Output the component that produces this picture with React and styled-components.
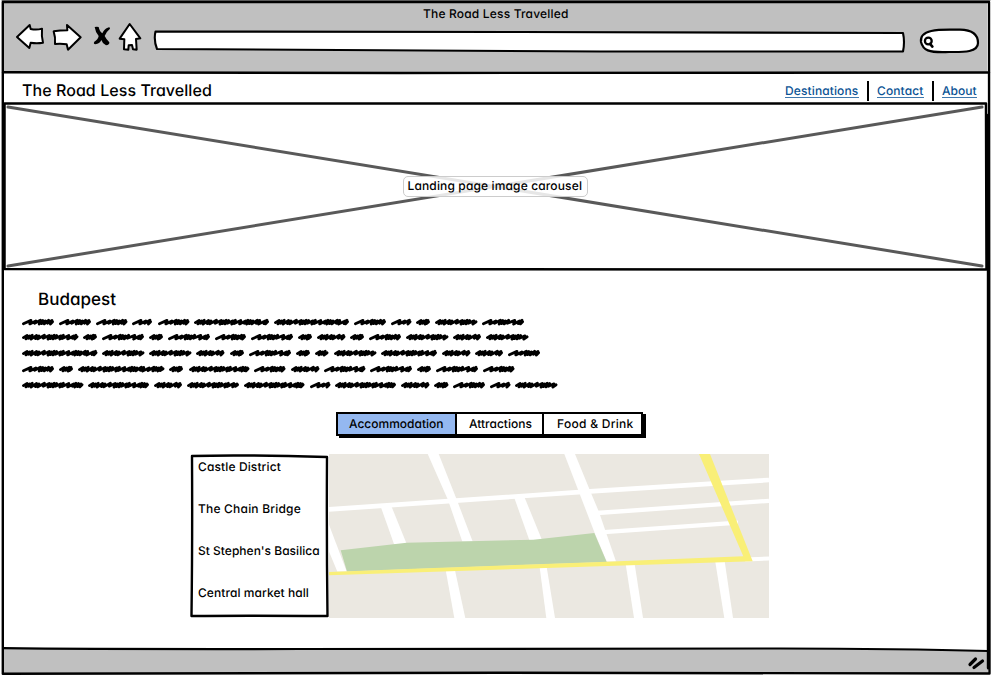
import React from "react";
import styled, { createGlobalStyle } from "styled-components";

const Global = createGlobalStyle`
  * { box-sizing: border-box; }
  body { margin: 0; background: #fff; overflow: hidden; }
`;

const Window = styled.main`
  position: relative;
  width: 992px;
  height: 676px;
  padding: 3px 4px 4px;
  display: flex;
  flex-direction: column;
  font-family: Inter, "Liberation Sans", sans-serif;
  font-feature-settings: "cv11" 1, "calt" 0;
  font-weight: 500;
  font-size: 12px;
  line-height: 16px;
  text-rendering: geometricPrecision;
  color: #000;
`;

const Outline = styled.svg`
  position: absolute;
  inset: 0;
  width: 100%;
  height: 100%;
  overflow: visible;
  pointer-events: none;
  fill: none;
  stroke: #000;
  stroke-linejoin: round;
  stroke-linecap: round;
`;

const Toolbar = styled.header`
  height: 70px;
  flex: none;
  margin-right: 1px;
  background: #c0c0c0;
`;

const Label = styled.span`
  display: inline-block;
  white-space: nowrap;
  letter-spacing: ${(p) => p.$track || 0}px;
`;

const WindowTitle = styled.div`
  height: 20px;
  padding: 3px 0 0 419px;
`;

const Controls = styled.div`
  display: flex;
  height: 36px;
  padding-left: 12px;
`;

const Icon = styled.svg`
  flex: none;
  width: ${(p) => p.$w}px;
  height: 32px;
  margin-right: ${(p) => p.$gap || 0}px;
  overflow: visible;
  fill: #fff;
  stroke: #000;
  stroke-width: 6;
  stroke-linejoin: round;
  stroke-linecap: round;
`;

const AddressBar = styled.div`
  position: relative;
  width: 752px;
  height: 22px;
  margin: 7px 14px 0 10px;
`;

const SearchBox = styled.div`
  position: relative;
  width: 60px;
  height: 26px;
  margin-top: 5px;
`;

const SiteHeader = styled.div`
  height: 30px;
  flex: none;
  display: flex;
  justify-content: space-between;
  padding: 8px 11px 0 18px;
`;

const SiteName = styled.h1`
  margin: 0;
  font-size: 16px;
  font-weight: 500;
  line-height: 18px;
`;

const Nav = styled.nav`
  display: flex;
`;

const NavLink = styled.a`
  height: 16px;
  margin-top: 1px;
  padding-top: 1px;
  width: ${(p) => p.$w}px;
  color: #0b5394;
  border-bottom: 1px solid #3f78ad;
`;

const Divider = styled.i`
  width: 2px;
  height: 20px;
  margin: 0 8px;
  background: #000;
`;

const Carousel = styled.section`
  position: relative;
  height: 168px;
  flex: none;
  display: flex;
  align-items: center;
  justify-content: center;
`;

const Caption = styled.div`
  position: relative;
  width: 185px;
  height: 21px;
  margin: 0 2px 2px 0;
  padding: 1px 0 0 4px;
  border: 1px solid #ccc;
  border-radius: 5px;
  background: rgba(255, 255, 255, 0.85);
`;

const Article = styled.section`
  height: 141px;
  flex: none;
  padding: 18px 18px 0;
`;

const Heading = styled.h2`
  margin: 0 0 6.5px 16px;
  height: 22px;
  font-size: 17px;
  font-weight: 500;
  line-height: 22px;
`;

const Line = styled.div`
  position: relative;
  display: flex;
  height: 15.8px;
`;

const Scribble = styled.svg`
  flex: none;
  height: 8px;
  width: ${(p) => p.$w}px;
  margin-right: ${(p) => p.$gap}px;
  overflow: visible;
  fill: none;
  stroke: #000;
  stroke-width: 2.8;
  stroke-linejoin: round;
  stroke-linecap: round;
`;

const Tabs = styled.div`
  display: flex;
  width: 307px;
  height: 24px;
  flex: none;
  margin: 0 0 1px 332px;
  border: 2px solid #000;
  box-shadow: 3px 2px 0 #000;
`;

const Tab = styled.button`
  width: ${(p) => p.$w}px;
  padding: 0 0 0 ${(p) => p.$pad}px;
  text-align: left;
  font: inherit;
  font-feature-settings: inherit;
  text-rendering: inherit;
  color: #000;
  border: 0;
  border-right: ${(p) => (p.$last ? 0 : 2)}px solid #000;
  background: ${(p) => (p.$active ? "#94b8f0" : "#fff")};
`;

const Explorer = styled.section`
  display: flex;
  height: 164px;
  margin: 17px 0 0 186px;
  flex: none;
`;

const PlaceList = styled.ul`
  position: relative;
  width: 139px;
  height: 164px;
  margin: 0;
  padding: 5px 0 0 8px;
  list-style: none;
`;

const Place = styled.li`
  height: 42px;
`;

const Map = styled.svg`
  width: 440px;
  height: 164px;
`;

const StatusBar = styled.footer`
  position: relative;
  height: 25px;
  margin-top: auto;
  flex: none;
`;

const lines = [
  [[22, 54], [59, 91], [95.5, 127], [132, 152], [157.5, 189], [194, 269], [274, 349], [354, 386], [390.5, 411], [416, 430], [435, 477.5], [482, 524]],
  [[22, 78.5], [83, 97], [102, 144], [149, 163], [168, 210], [215, 246], [251, 293], [298, 312], [317, 345.5], [350, 364], [369, 401], [405.5, 448], [453, 481], [486, 528.5]],
  [[22, 97.5], [102, 144.5], [149, 191.5], [196, 224.5], [229.5, 243.5], [249, 291], [295.5, 309.5], [315, 328.5], [333.5, 376], [381, 437], [441.5, 470], [475, 503], [508, 540]],
  [[22, 54], [59, 73], [78, 164.5], [169, 183], [188.5, 249], [254, 285.5], [290.5, 319], [324, 365.5], [370, 412], [417, 431], [436, 478], [482.5, 514]],
  [[22, 83.5], [88, 149], [154, 182], [187, 239], [244, 304.5], [309.5, 330], [335, 396], [400.5, 429], [434, 448.5], [453, 485], [489.5, 510], [515, 557.5]],
];

// Pen strokes filling one word of placeholder text: open loops mixed with dense ones.
const openSteps = [6.2, 4.8, 4.6, 2.4, 2.6, 3.2];
const denseSteps = [2.3, 2.6, 2.5, 4.4, 2.4, 5.4, 4.8];

function wordPath(w) {
  const open = (w > 30 && w < 33) || (w > 19 && w < 22) || (w > 41 && w < 42.3);
  const steps = open ? openSteps : denseSteps;
  let x = 1.4;
  let d = `M${x} ${open ? 5.8 : 4.6}`;
  for (let i = 0; x < w - 5; i++) {
    const s = steps[i % steps.length];
    const hi = [2.4, 2.9, 2.2][i % 3];
    const lo = [5.9, 5.3, 6.1, 5.6][i % 4];
    const peak = Math.min(x + s + 1.4, w - 2);
    d += `L${peak} ${hi}L${Math.min(peak - 1.2, w - 3.6)} ${lo}`;
    x += s;
  }
  return d + `L${w - 1.4} 3.8`;
}

function Words({ words }) {
  return (
    <Line>
      {words.map(([a, b], i) => (
        <Scribble key={a} $w={b - a} $gap={i < words.length - 1 ? words[i + 1][0] - b : 0}>
          <path d={wordPath(b - a)} />
        </Scribble>
      ))}
    </Line>
  );
}

const places = [
  ["Castle District", 0.12],
  ["The Chain Bridge", 0.2],
  ["St Stephen's Basilica", 0.02],
  ["Central market hall", 0.07],
];

export default function App() {
  return (
    <>
      <Global />
      <Window>
        <Toolbar>
          <WindowTitle><Label $track={0.18}>The Road Less Travelled</Label></WindowTitle>
          <Controls>
            <Icon $w={28} $gap={9} viewBox="48 69 84 96" preserveAspectRatio="xMinYMin">
              <path d="M51 111L89 75L92 87Q110 91 126 86Q124 108 129 128Q110 131 92 128L88 144Q72 130 51 111Z" />
            </Icon>
            <Icon $w={29} $gap={11} viewBox="159 69 87 96" preserveAspectRatio="xMinYMin">
              <path d="M161 94Q180 91 202 91L201 75L242 112L204 149L200 133Q184 130 165 132Q167 112 161 94Z" />
            </Icon>
            <Icon $w={18} $gap={8} viewBox="279 69 54 96" preserveAspectRatio="xMinYMin">
              <path fill="#000" stroke="none" d="M284 81Q291 79 296 81Q299 95 307 100Q313 86 323 83Q330 80 330 86Q317 97 314 108Q319 118 328 127Q329 135 318 136Q308 132 304 120Q299 131 286 133Q279 131 283 125Q294 119 296 108Q286 96 284 81Z" />
            </Icon>
            <Icon $w={24} viewBox="357 69 72 96" preserveAspectRatio="xMinYMin">
              <path d="M359 116L389 72L421 115L408 117L410 149L399 148L396 135L386 136L385 149L372 148L373 118Z" />
            </Icon>
            <AddressBar>
              <Outline viewBox="153 30 752 22" strokeWidth="2.1">
                <path fill="#fff" d="M155.5 31.5L520 32L903 33Q905 42 903 51.5L600 51.5Q500 50 157 49Q153.5 40 155.5 31.5Z" />
              </Outline>
            </AddressBar>
            <SearchBox>
              <Outline viewBox="919 28 60 26" strokeWidth="2.2">
                <path fill="#fff" d="M921 42C919 27 947 30 960 29.7C977 30 978 39 978 43C978 53 961 52 949 52C928 53 923 50 921 42Z" />
                <circle cx="928.3" cy="41" r="3.4" strokeWidth="2.3" />
                <path strokeWidth="2.6" d="M930 43.8L932.4 46.6" />
              </Outline>
            </SearchBox>
          </Controls>
        </Toolbar>

        <SiteHeader>
          <SiteName><Label $track={0.06}>The Road Less Travelled</Label></SiteName>
          <Nav>
            <NavLink $w={74}><Label $track={0.12}>Destinations</Label></NavLink>
            <Divider />
            <NavLink $w={47}><Label $track={0.1}>Contact</Label></NavLink>
            <Divider />
            <NavLink $w={35}><Label>About</Label></NavLink>
          </Nav>
        </SiteHeader>

        <Carousel>
          <Outline viewBox="4 103 984 168" strokeWidth="2.5">
            <path stroke="#595959" strokeWidth="3" d="M8 107L982 266M8 266L982 107" />
            <path d="M4.5 103.5L986 103.5L986.5 269.5L4.5 269Z" />
          </Outline>
          <Caption><Label $track={0.14}>Landing page image carousel</Label></Caption>
        </Carousel>

        <Article>
          <Heading><Label $track={0.03}>Budapest</Label></Heading>
          {lines.map((words, i) => <Words key={i} words={words} />)}
        </Article>

        <Tabs>
          <Tab $w={119} $pad={11} $active><Label>Accommodation</Label></Tab>
          <Tab $w={87} $pad={12}><Label>Attractions</Label></Tab>
          <Tab $w={97} $pad={13} $last><Label $track={0.28}>Food &amp; Drink</Label></Tab>
        </Tabs>

        <Explorer>
          <PlaceList>
            <Outline viewBox="190 454 139 164" strokeWidth="2.4">
              <path d="M192 456Q240 454.5 327 457Q326.5 540 327.5 616Q240 615.5 191.5 616Q192.5 540 192 456Z" />
            </Outline>
            {places.map(([name, track]) => (
              <Place key={name}><Label $track={track}>{name}</Label></Place>
            ))}
          </PlaceList>
          <Map viewBox="329 454 440 164">
            <rect x="328" y="454" width="441" height="164" fill="#ebe8e1" />
            <g fill="#fff">
              <path d="M427.7 454H438.7L456.5 499L472.7 541.5H462.3L448 500Z" />
              <path d="M564.3 454H575L591 493L599 512L616 561.5H606.7L594.7 533Z" />
              <path d="M514 497H524.4L542 540H529.3Z" />
              <path d="M380.5 506H391.3L406.7 544H394Z" />
              <path d="M328 522L346.7 571.5H337.3L328 549Z" />
              <path d="M445.5 569H454.7L465.3 618H454.3Z" />
              <path d="M539.5 566H546.5L555 618H546.3Z" />
              <path d="M625.5 563H634.5L643 618H634Z" />
              <path d="M715 560H724.5L733 618H724.3Z" />
            </g>
            <g fill="none" stroke="#fff" strokeWidth="4.7">
              <path d="M328 509.5L590 491.3L769 480" />
              <path d="M597 513L769 500.8" strokeWidth="4.3" />
              <path d="M604 532.2L738 522.7" strokeWidth="4.3" />
              <path d="M745 559.5L769 558.5" strokeWidth="4" />
            </g>
            <path fill="#bcd4ac" d="M340.7 550.3L406.7 542.7L533.3 539.7L594.3 533L606.7 562L347 571.5Z" />
            <path fill="#f9ef77" d="M328 572L420 568.5L600 562.1L743.3 556.3L699 454H710L752.7 561.3L600 566.2L420 572.2L328 575.3Z" />
          </Map>
        </Explorer>

        <StatusBar>
          <Outline viewBox="4 647 984 25" strokeWidth="2.2">
            <path fill="#c0c0c0" stroke="none" d="M3 648.5L300 649L780 648.5L900 649L988 651V673H4Z" />
            <path d="M3 648.2Q100 649.3 300 649T780 648.5Q900 648.5 988 651" />
            <path strokeWidth="3.2" d="M970 664.5L975.5 659M974 667.5L982.5 661" />
          </Outline>
        </StatusBar>

        <Outline viewBox="0 0 992 676" strokeWidth="2.4">
          <path stroke="#777" strokeWidth="1" d="M2 .5H990" />
          <path d="M2.8 2H989L989.5 673.5L500 672.8L2.8 673.8Z" />
          <path d="M3 72.3L400 73L989 72.5" />
          <path strokeWidth="3" d="M988.3 115V668" />
        </Outline>
      </Window>
    </>
  );
}
